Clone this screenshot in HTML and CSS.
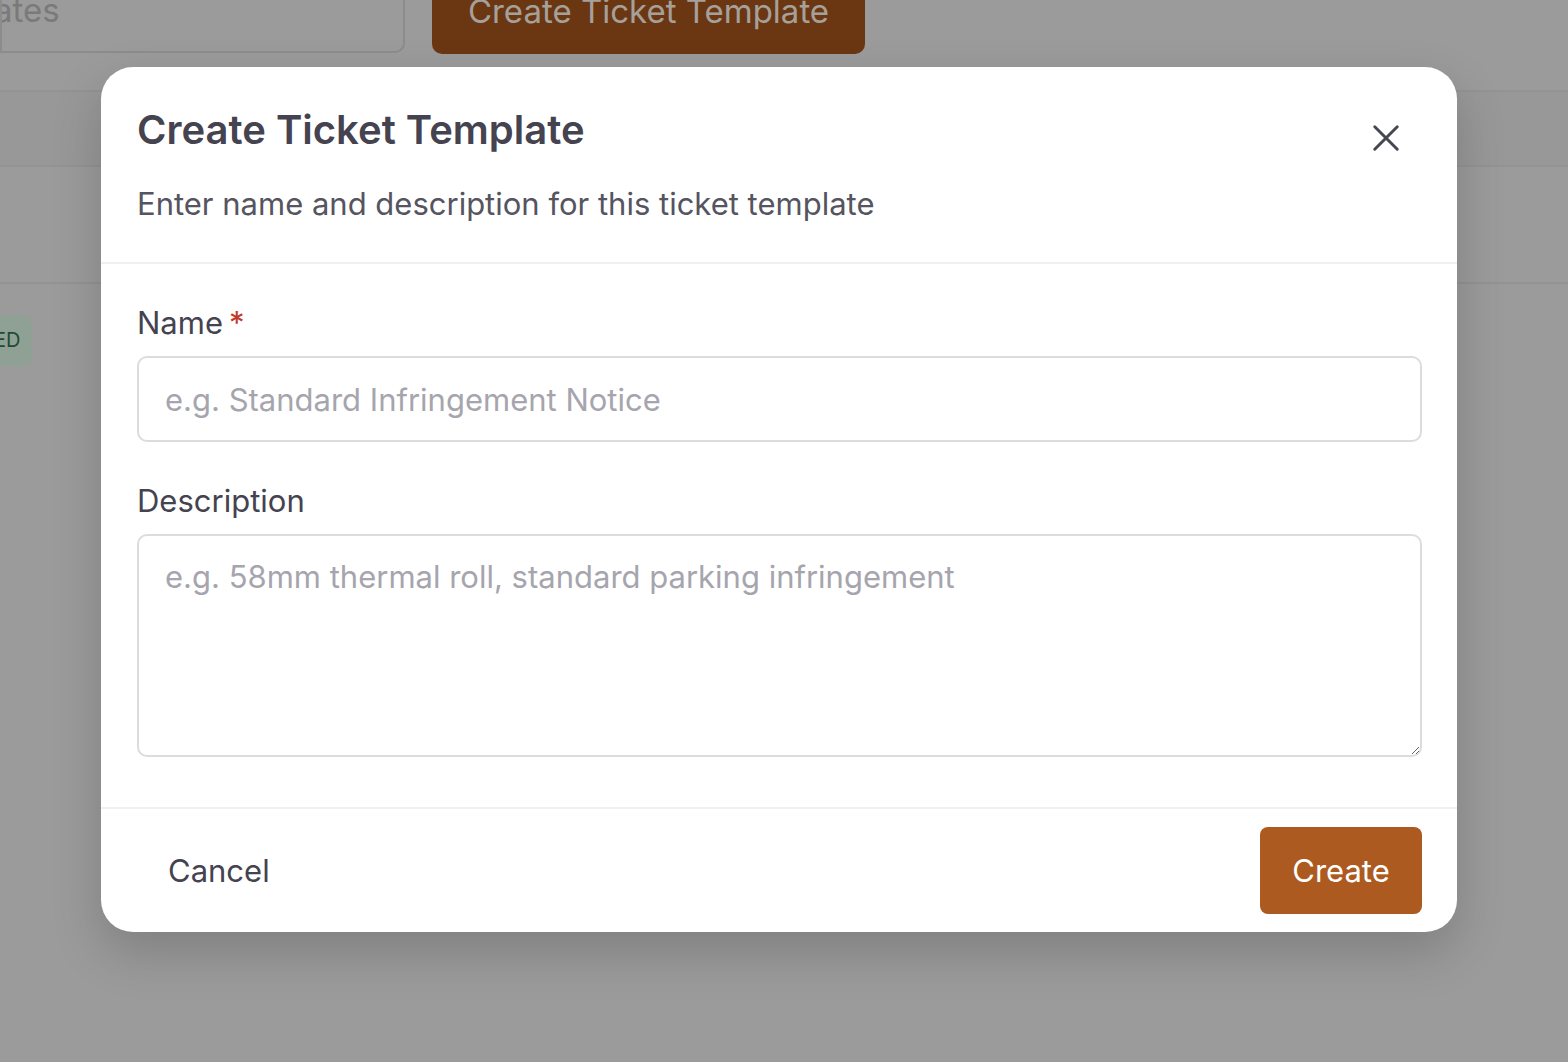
FILE: index.html
```html
<!DOCTYPE html>
<html lang="en">
<head>
  <meta charset="UTF-8">
  <meta name="viewport" content="width=device-width, initial-scale=1.0">
  <title>Ticket Templates</title>
  <link rel="stylesheet" href="styles.css">
</head>
<body>
  <div class="page">
    <div class="toolbar">
      <div class="search">ates</div>
      <div class="create-top">Create Ticket Template</div>
    </div>
    <div class="table-head"></div>
    <div class="table-sub"></div>
    <div class="table-row">
      <span class="badge">ED</span>
    </div>
  </div>

  <div class="overlay">
    <div class="modal">
      <div class="modal-header">
        <div class="titles">
          <h2 class="modal-title">Create Ticket Template</h2>
          <p class="modal-sub">Enter name and description for this ticket template</p>
        </div>
        <button class="close-btn" aria-label="Close">
          <svg width="36" height="36" viewBox="0 0 24 24" fill="none" stroke="#474752" stroke-width="2" stroke-linecap="round">
            <path d="M4.5 4.5l15 15M19.5 4.5l-15 15"/>
          </svg>
        </button>
      </div>
      <div class="modal-body">
        <label class="field-label">Name<span class="req">*</span></label>
        <input class="field-input" type="text" placeholder="e.g. Standard Infringement Notice">
        <label class="field-label desc-label">Description</label>
        <textarea class="field-area" placeholder="e.g. 58mm thermal roll, standard parking infringement"></textarea>
      </div>
      <div class="modal-footer">
        <button class="btn-cancel">Cancel</button>
        <button class="btn-create">Create</button>
      </div>
    </div>
  </div>
</body>
</html>
```

FILE: styles.css
```css
body {
  margin: 0;
  background-color: #9b9b9b;
  font-family: Inter, "Open Sans", sans-serif;
  overflow: hidden;
}
.page {
  height: 1062px;
}
.toolbar {
  display: flex;
  align-items: flex-end;
  gap: 27px;
  height: 92px;
  border-bottom: 2px solid #939393;
  box-sizing: border-box;
}
.search {
  width: 405px;
  height: 54px;
  margin-top: -1px;
  align-self: flex-start;
  box-sizing: border-box;
  border: 2px solid #8c8c8c;
  border-top: none;
  border-radius: 0 0 10px 0;
  color: #7a7a7a;
  font-size: 33px;
  line-height: 22px;
  text-indent: -8px;
  overflow: hidden;
}
.create-top {
  align-self: flex-start;
  width: 433px;
  height: 54px;
  background-color: #6b3713;
  border-radius: 0 0 10px 10px;
  color: #a6a09a;
  font-size: 33px;
  line-height: 22px;
  text-align: center;
  overflow: hidden;
}
.table-head {
  height: 73px;
  background-color: #989898;
  border-bottom: 2px solid #939393;
}
.table-sub {
  height: 115px;
  border-bottom: 2px solid #939393;
}
.table-row {
  padding-top: 31px;
}
.badge {
  display: inline-block;
  width: 33px;
  height: 51px;
  margin-left: -1px;
  background-color: #8fa095;
  border-radius: 0 8px 8px 0;
  color: #1f4a33;
  font-size: 20px;
  line-height: 51px;
  overflow: hidden;
  text-indent: -5px;
}

.overlay {
  position: absolute;
  top: 0;
  left: 0;
  right: 0;
  bottom: 0;
}
.modal {
  position: absolute;
  left: 101px;
  top: 67px;
  width: 1356px;
  background-color: white;
  border-radius: 32px;
  box-shadow: 0 20px 50px rgba(0, 0, 0, 0.18);
  overflow: hidden;
}
.modal-header {
  display: flex;
  justify-content: space-between;
  align-items: flex-start;
  padding: 38px 36px 0 36px;
  height: 197px;
  box-sizing: border-box;
  border-bottom: 2px solid #f0f0f0;
}
.modal-title {
  margin: 0;
  font-size: 40px;
  font-weight: 600;
  color: #44434f;
  line-height: 50px;
  letter-spacing: 0;
}
.modal-sub {
  margin: 31px 0 0 0;
  font-size: 31px;
  color: #55545f;
  line-height: 36px;
}
.close-btn {
  background: none;
  border: none;
  padding: 0;
  margin-top: 13px;
  margin-right: 15px;
  width: 40px;
  height: 40px;
  display: flex;
  align-items: center;
  justify-content: center;
}
.modal-body {
  padding: 39px 35px 50px 36px;
  display: flex;
  flex-direction: column;
}
.field-label {
  font-size: 31px;
  color: #44434f;
  line-height: 40px;
  margin-bottom: 13px;
}
.req {
  color: #c0392b;
  margin-left: 6px;
}
.desc-label {
  margin-top: 39px;
}
.field-input,
.field-area {
  font-family: Inter, "Open Sans", sans-serif;
  font-size: 31px;
  color: #44434f;
  border: 2px solid #dcdcdf;
  border-radius: 10px;
  padding: 0 26px;
  box-sizing: border-box;
  outline: none;
}
.field-input {
  height: 86px;
}
.field-area {
  height: 223px;
  padding-top: 22px;
  resize: vertical;
}
.field-input::placeholder,
.field-area::placeholder {
  color: #a6a5ae;
}
.modal-footer {
  display: flex;
  justify-content: space-between;
  align-items: center;
  padding: 18px 35px 18px 36px;
  border-top: 2px solid #f0f0f0;
}
.btn-cancel {
  background: none;
  border: none;
  font-family: Inter, "Open Sans", sans-serif;
  font-size: 31px;
  color: #44434f;
  padding: 0 31px;
  height: 87px;
}
.btn-create {
  background-color: #ad5a20;
  border: none;
  border-radius: 8px;
  color: white;
  font-family: Inter, "Open Sans", sans-serif;
  font-size: 31px;
  width: 162px;
  height: 87px;
}
```
